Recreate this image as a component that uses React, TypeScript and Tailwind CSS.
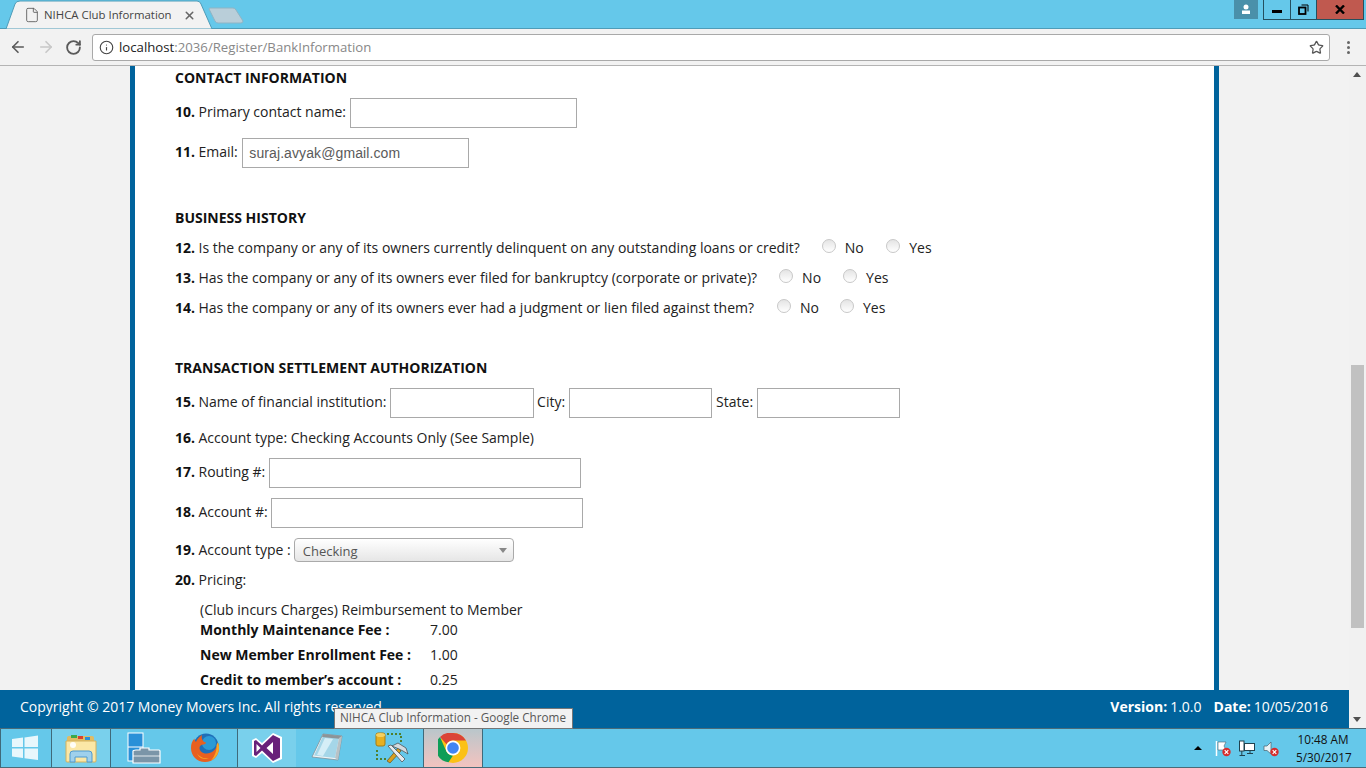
import React from "react";
import { ArrowLeft, ArrowRight, RotateCw, Info, Star, X, File } from "lucide-react";

function Radio({ className = "" }: { className?: string }) {
  return (
    <input
      type="radio"
      readOnly
      className={`appearance-none w-[14px] h-[14px] shrink-0 rounded-full border border-[#c8c8c8] bg-gradient-to-b from-[#e4e4e4] to-white -translate-y-px ${className}`}
    />
  );
}

function TextBox({ className = "", value }: { className?: string; value?: string }) {
  return (
    <input
      readOnly
      value={value ?? ""}
      className={`h-[30px] border border-[#a9a9a9] bg-white px-[6px] text-[14px] tracking-[0.1px] text-[#5a5a5a] font-['Liberation_Sans',sans-serif] outline-none ${className}`}
    />
  );
}

function Num({ n }: { n: number }) {
  return <b className="font-bold text-[#111] mr-[3.5px]">{n}.</b>;
}

function Heading({ children, className = "" }: { children: React.ReactNode; className?: string }) {
  return <div className={`font-bold text-[#111] flex items-center -translate-y-px ${className}`}>{children}</div>;
}

function Question({ n, text, a, b, c, d }: { n: number; text: string; a: string; b: string; c: string; d: string }) {
  return (
    <div className="h-[20px] mt-[10px] flex items-center whitespace-nowrap -translate-y-px">
      <Num n={n} />
      <span>{text}</span>
      <Radio className={a} />
      <span className={b}>No</span>
      <Radio className={c} />
      <span className={d}>Yes</span>
    </div>
  );
}

function Label({ n, children, className = "-translate-y-[2px]" }: { n: number; children: React.ReactNode; className?: string }) {
  return (
    <span className={className}>
      <Num n={n} />
      {children}
    </span>
  );
}

function TabBar() {
  return (
    <div className="h-[29px] bg-[#65c8ea] relative shrink-0 border-b border-[#4e9cb8]">
      <svg className="absolute left-0 top-0" width="250" height="29" viewBox="0 0 250 29">
        <path d="M6 29 L15 4 Q16 1 20 1 L197 1 Q200 1 201 4 L212 29 Z" fill="#f2f2f2" stroke="#4e9cb8" />
        <path d="M210 8 L233 8 Q235 8 236 10 L243 21 Q243 23 241 23 L218 23 Q216 23 215 21 L209 9 Q209 8 210 8 Z" fill="#b9ced9" stroke="#8fb4c4" />
      </svg>
      <div className="absolute left-[24px] top-[7px] flex items-center h-[16px]">
        <File size={16} strokeWidth={1.3} className="text-[#5a5a5a]" />
        <span className="ml-[4px] text-[11.4px] text-[#444] whitespace-nowrap">NIHCA Club Information</span>
        <X size={13} strokeWidth={2.8} className="ml-[11px] text-[#666]" />
      </div>
      <div className="absolute right-[108px] top-0 w-[24px] h-[19px] bg-[#4a90aa] flex items-center justify-center">
        <svg width="10" height="11" viewBox="0 0 10 11" fill="#fff">
          <circle cx="5" cy="3" r="2.5" />
          <rect x="1" y="6.5" width="8" height="3.5" />
        </svg>
      </div>
      <div className="absolute right-[2px] top-0 flex h-[20px] border border-t-0 border-[#24505f]">
        <div className="w-[27px] border-r border-[#24505f] flex items-center justify-center">
          <div className="w-[10px] h-[3px] bg-black mt-[3px]" />
        </div>
        <div className="w-[25px] flex items-center justify-center">
          <svg width="11" height="11" viewBox="0 0 11 11" fill="none" stroke="#000">
            <rect x="1" y="3.5" width="6.5" height="6.5" strokeWidth="1.8" />
            <path d="M3.5 1 H10 V7.5" strokeWidth="1" />
          </svg>
        </div>
        <div className="w-[47px] bg-[#c0594f] border-l border-[#24505f] flex items-center justify-center">
          <svg width="10" height="9" viewBox="0 0 10 9" stroke="#000" strokeWidth="2.4" fill="none">
            <path d="M1 0.5 L9 8.5 M9 0.5 L1 8.5" />
          </svg>
        </div>
      </div>
    </div>
  );
}

function Toolbar() {
  return (
    <div className="h-[37px] bg-[#f2f2f2] border-b border-[#b4b4b4] flex items-center shrink-0">
      <ArrowLeft size={18} strokeWidth={2.2} className="ml-[9px] text-[#5a5a5a]" />
      <ArrowRight size={18} strokeWidth={2.2} className="ml-[10px] text-[#c8c8c8]" />
      <RotateCw size={17} strokeWidth={2.6} className="ml-[10px] text-[#5a5a5a]" />
      <div className="ml-[10px] w-[1238px] h-[27px] bg-white border border-[#a9a9a9] rounded-[3px] flex items-center">
        <Info size={15} strokeWidth={1.8} className="ml-[6px] text-[#444]" />
        <span className="ml-[5px] text-[13.2px] whitespace-nowrap text-[#888] translate-y-px">
          <span className="text-[#222]">localhost</span>:2036/Register/BankInformation
        </span>
        <Star size={15} strokeWidth={2} className="ml-auto mr-[5px] text-[#555]" />
      </div>
      <div className="ml-[17px] flex flex-col gap-[2px]">
        <i className="block w-[3px] h-[3px] rounded-full bg-[#666]" />
        <i className="block w-[3px] h-[3px] rounded-full bg-[#666]" />
        <i className="block w-[3px] h-[3px] rounded-full bg-[#666]" />
      </div>
    </div>
  );
}

function Form() {
  return (
    <div className="flex-1 min-h-0 overflow-hidden flex bg-[#f2f2f2]">
      <div className="ml-[130px] mr-[130px] flex-1 bg-white border-x-[5px] border-[#00639c] pl-[40px] text-[14px] text-[#222]">
        <Heading className="h-[24px]">CONTACT INFORMATION</Heading>
        <div className="h-[30px] mt-[8px] flex items-center whitespace-nowrap">
          <Label n={10}>Primary contact name:</Label>
          <TextBox className="w-[227px] ml-[4px]" />
        </div>
        <div className="h-[30px] mt-[10px] flex items-center whitespace-nowrap">
          <Label n={11}>Email:</Label>
          <TextBox className="w-[227px] ml-[4.5px]" value="suraj.avyak@gmail.com" />
        </div>

        <Heading className="h-[20px] mt-[40px]">BUSINESS HISTORY</Heading>
        <Question n={12} text="Is the company or any of its owners currently delinquent on any outstanding loans or credit?" a="ml-[22px]" b="ml-[9px]" c="ml-[22px]" d="ml-[9.5px]" />
        <Question n={13} text="Has the company or any of its owners ever filed for bankruptcy (corporate or private)?" a="ml-[22px]" b="ml-[9px]" c="ml-[22px]" d="ml-[9px]" />
        <Question n={14} text="Has the company or any of its owners ever had a judgment or lien filed against them?" a="ml-[23px]" b="ml-[9px]" c="ml-[21px]" d="ml-[9px]" />

        <Heading className="h-[20px] mt-[40px]">TRANSACTION SETTLEMENT AUTHORIZATION</Heading>
        <div className="h-[30px] mt-[10px] flex items-center whitespace-nowrap">
          <Label n={15}>Name of financial institution:</Label>
          <TextBox className="w-[144px] ml-[3.5px]" />
          <span className="ml-[3px] -translate-y-[2px]">City:</span>
          <TextBox className="w-[143px] ml-[4px]" />
          <span className="ml-[4px] -translate-y-[2px]">State:</span>
          <TextBox className="w-[143px] ml-[4px]" />
        </div>
        <div className="h-[20px] mt-[10px] flex items-center whitespace-nowrap -translate-y-px">
          <Num n={16} />
          <span>Account type: Checking Accounts Only (See Sample)</span>
        </div>
        <div className="h-[30px] mt-[10px] flex items-center whitespace-nowrap">
          <Label n={17}>Routing #:</Label>
          <TextBox className="w-[312px] ml-[4px]" />
        </div>
        <div className="h-[30px] mt-[10px] flex items-center whitespace-nowrap">
          <Label n={18}>Account #:</Label>
          <TextBox className="w-[312px] ml-[3.5px]" />
        </div>
        <div className="h-[24px] mt-[10px] flex items-center whitespace-nowrap">
          <Label n={19} className="-translate-y-px">Account type :</Label>
          <div className="ml-[3px] w-[220px] h-[24px] rounded-[4px] border border-[#aaa] bg-gradient-to-b from-white to-[#e6e6e6] flex items-center pl-[8px] pr-[6px] text-[13px] text-[#555]">
            <span className="translate-y-[2px]">Checking</span>
            <span className="ml-auto w-0 h-0 border-x-[4px] border-x-transparent border-t-[5px] border-t-[#888]" />
          </div>
        </div>
        <div className="h-[20px] mt-[8px] flex items-center whitespace-nowrap -translate-y-px">
          <Num n={20} />
          <span>Pricing:</span>
        </div>
        <div className="ml-[25px] mt-[10px]">
          <div className="h-[20px] flex items-center -translate-y-px">(Club incurs Charges) Reimbursement to Member</div>
          <div className="grid grid-cols-[230px_60px] auto-rows-[25px] items-center leading-[20px] -mt-[3px]">
            <b className="font-bold text-[#111]">Monthly Maintenance Fee :</b>
            <span>7.00</span>
            <b className="font-bold text-[#111]">New Member Enrollment Fee :</b>
            <span>1.00</span>
            <b className="font-bold text-[#111]">Credit to member’s account :</b>
            <span>0.25</span>
          </div>
        </div>
      </div>
    </div>
  );
}

function Footer() {
  return (
    <footer className="h-[38px] shrink-0 bg-[#00639c] text-white text-[14px] flex items-center justify-between pl-[20px] pr-[21px] pb-[6px]">
      <span>Copyright © 2017 Money Movers Inc. All rights reserved</span>
      <span className="flex items-center">
        <b className="font-bold">Version:</b>
        <span className="ml-[3px]">1.0.0</span>
        <b className="font-bold ml-[12px]">Date:</b>
        <span className="ml-[3px]">10/05/2016</span>
      </span>
    </footer>
  );
}

function Scrollbar() {
  return (
    <div className="w-[17px] shrink-0 bg-[#f1f1f1] relative">
      <div className="absolute left-[4px] top-[6px] w-0 h-0 border-x-[4px] border-x-transparent border-b-[5px] border-b-[#505050]" />
      <div className="absolute left-[2px] top-[299px] w-[13px] h-[263px] bg-[#c1c1c1]" />
      <div className="absolute left-[4px] bottom-[6px] w-0 h-0 border-x-[4px] border-x-transparent border-t-[5px] border-t-[#505050]" />
    </div>
  );
}

const WinLogo = () => (
  <svg width="28" height="28" viewBox="0 0 28 28" fill="#fff" fillOpacity="0.85">
    <path d="M1 5 L12 3.6 V13 H1 Z M13.5 3.4 L27 1.6 V13 H13.5 Z M1 14.5 H12 V24 L1 22.6 Z M13.5 14.5 H27 V26 L13.5 24.2 Z" />
  </svg>
);

const Explorer = () => (
  <svg width="32" height="32" viewBox="0 0 32 32">
    <path d="M2 6 Q2 4 4 4 H27 Q29 4 29 6 V10 H2 Z" fill="#e0bb64" />
    <rect x="6" y="3" width="6" height="3" fill="#3ca84a" />
    <rect x="13" y="4" width="5" height="3" fill="#d8402f" />
    <rect x="20" y="5" width="5" height="3" fill="#2a8fd8" />
    <path d="M1 9 H31 V29 Q31 30 30 30 H2 Q1 30 1 29 Z" fill="#fbe7a6" stroke="#d4b25c" />
    <path d="M5 30 V22 Q5 19 8 19 H24 Q27 19 27 22 V30 H22 V25 H10 V30 Z" fill="#9fd0ec" stroke="#4f9ad0" />
    <circle cx="8" cy="13" r="3" fill="#fff" fillOpacity="0.9" />
  </svg>
);

const ServerMgr = () => (
  <svg width="34" height="32" viewBox="0 0 34 32">
    <rect x="1" y="1" width="15" height="28" fill="#2a90d8" stroke="#fff" />
    <path d="M1 15 H16" stroke="#fff" />
    <path d="M9 18 H13 V16 H22 V18 H32 Q33 18 33 19 V31 H6 V19 Q6 18 9 18 Z" fill="#7b95a8" stroke="#fff" strokeWidth="1.2" />
    <path d="M6 24 H33" stroke="#fff" strokeWidth="0.8" />
  </svg>
);

const Firefox = () => (
  <svg width="30" height="30" viewBox="0 0 30 30">
    <circle cx="16" cy="13" r="12.5" fill="#1f6fb8" />
    <circle cx="19" cy="10" r="7" fill="#2b9ad6" />
    <path d="M12 2 C9 4 7 6 6 9 C5 8 4.5 7 4.5 5.5 C2 8 1 11 1 15 C1 23 7 29 15 29 C23 29 29 23 29 15 C29 13 28.6 11 27.8 9.5 C27.5 14 24 20 17 20.5 C12.5 20.8 9.5 18 9.5 15 C9.5 12.5 12 11 14 11.5 C15 11 16 10.5 16 9.5 C13 9 11 6 12 2 Z" fill="#e8601f" />
    <path d="M27.8 9.5 C28.6 11 29 13 29 15 C29 20 26 25 21 27.5 C25 23 27 17 26.5 12 Z" fill="#f9a825" />
    <path d="M7 20 C9 24 14 26 19 25 C15 27 9 26 7 20 Z" fill="#f9a825" />
  </svg>
);

const VS = () => (
  <svg width="32" height="32" viewBox="0 0 32 32">
    <path d="M22 1 L31 5 V27 L22 31 L11 21 L5 26 L1 24 V8 L5 6 L11 11 Z" fill="#fff" />
    <path d="M22 3 L29 6.5 V25.5 L22 29 L11 18.5 L5 24 L3 23 V9 L5 8 L11 13.5 Z M22 10 L15.5 16 L22 22 Z M5.5 12 V20 L9.5 16 Z" fill="#68217a" fillRule="evenodd" />
  </svg>
);

const Notepad = () => (
  <svg width="32" height="30" viewBox="0 0 32 30">
    <path d="M12 1 L31 3 L27 27 L1 24 Z" fill="#eef4f6" stroke="#7f9199" strokeWidth="0.8" />
    <path d="M12 3 L28 5 L24 25 L3 22.5 Z" fill="#a5d6e8" />
    <path d="M6 22 L14 5 L22 6 L12 23 Z" fill="#d5eef7" />
    <path d="M12 1 L31 3 L30.5 6 L11 4 Z" fill="#8c9498" />
    <path d="M28 5 L24 25 L27 27 L31 3 Z" fill="#b8c2c6" />
  </svg>
);

const Tools = () => (
  <svg width="34" height="32" viewBox="0 0 34 32">
    <rect x="1" y="1" width="9" height="13" rx="2" fill="#e6b020" stroke="#a87c10" />
    <ellipse cx="5.5" cy="3" rx="4.5" ry="2" fill="#f4d060" />
    <path d="M12 2 H26 V12 M2 18 V27 H11" fill="none" stroke="#4f7f2e" strokeWidth="2" strokeDasharray="2 2" />
    <path d="M12 29 L23 16 L26 19 L15 31 Z" fill="#d8a020" stroke="#604010" strokeWidth="0.6" />
    <path d="M17 14 L23 11 L31 16 L33 22 L28 19 L24 17 Z" fill="#d5dbe0" stroke="#444" strokeWidth="0.7" />
    <path d="M13 14 L16 13 L30 27 L27 30 Z" fill="#e6eaee" stroke="#444" strokeWidth="0.7" />
  </svg>
);

const Chrome = () => (
  <svg width="30" height="30" viewBox="0 0 30 30">
    <circle cx="15" cy="15" r="15" fill="#fbc116" />
    <path d="M15 0 A15 15 0 0 1 28 7.5 H15 A7.5 7.5 0 0 0 8.5 11.2 L2 3.9 A15 15 0 0 1 15 0 Z" fill="#db4437" />
    <path d="M2 3.9 L8.5 18.8 A7.5 7.5 0 0 0 15 22.5 L10.5 29.3 A15 15 0 0 1 2 3.9 Z" fill="#0f9d58" />
    <circle cx="15" cy="15" r="7.4" fill="#fff" />
    <circle cx="15" cy="15" r="5.8" fill="#4285f4" />
  </svg>
);

function Flag() {
  return (
    <svg width="16" height="17" viewBox="0 0 16 17">
      <path d="M1.5 1 V16" stroke="#fff" strokeWidth="1.5" />
      <path d="M3 2 H11 L9 6 L11 10 H3 Z" fill="#fff" stroke="#47606c" strokeWidth="0.6" />
      <circle cx="11.5" cy="12" r="4.2" fill="#d62d2d" />
      <path d="M9.7 10.2 L13.3 13.8 M13.3 10.2 L9.7 13.8" stroke="#fff" strokeWidth="1.2" />
    </svg>
  );
}

function Net() {
  return (
    <svg width="16" height="17" viewBox="0 0 16 17" fill="none" stroke="#20424f">
      <rect x="0.5" y="1" width="4.5" height="10" fill="#fff" />
      <rect x="5.5" y="3.5" width="10" height="7" fill="#fff" />
      <path d="M2.8 11 V15.5 M8 13.5 H14 M11 10.5 V13.5 M0.5 15.5 H6" />
    </svg>
  );
}

function Speaker() {
  return (
    <svg width="16" height="17" viewBox="0 0 16 17">
      <path d="M1 6 H4 L8 2 V14 L4 10.5 H1 Z" fill="#e8f2f6" stroke="#47606c" strokeWidth="0.7" />
      <circle cx="11.5" cy="12" r="4.2" fill="#d62d2d" />
      <path d="M9.7 10.2 L13.3 13.8 M13.3 10.2 L9.7 13.8" stroke="#fff" strokeWidth="1.2" />
    </svg>
  );
}

function TaskBtn({ children, className = "" }: { children: React.ReactNode; className?: string }) {
  return <div className={`h-full flex items-center border-l border-[#3f6a7a] ${className}`}>{children}</div>;
}

function Taskbar() {
  return (
    <div className="h-[40px] shrink-0 bg-[#65c8ea] border-y border-[#4a6b78] flex items-stretch relative">
      <TaskBtn className="w-[51px] pl-[10px]"><WinLogo /></TaskBtn>
      <TaskBtn className="w-[59px] pl-[13px] bg-[#79d0ec]"><Explorer /></TaskBtn>
      <TaskBtn className="w-[127px] pl-[16px] gap-[29px]">
        <ServerMgr />
        <Firefox />
      </TaskBtn>
      <TaskBtn className="w-[59px] pl-[13px] bg-[#79d0ec]"><VS /></TaskBtn>
      <TaskBtn className="w-[60px] pl-[15px] border-l-0"><Notepad /></TaskBtn>
      <TaskBtn className="w-[67px] pl-[19px] border-l-0"><Tools /></TaskBtn>
      <TaskBtn className="w-[60px] pl-[14px] bg-gradient-to-b from-[#b9c6cb] to-[#f3c3bf] border-r"><Chrome /></TaskBtn>
      <div className="ml-auto flex items-center">
        <div className="w-0 h-0 border-x-[4px] border-x-transparent border-b-[4px] border-b-black mr-[13px]" />
        <Flag />
        <span className="w-[8px]" />
        <Net />
        <span className="w-[8px]" />
        <Speaker />
        <div className="ml-[17px] mr-[16px] w-[54px] text-center text-[11.75px] leading-[18px] text-[#111] whitespace-nowrap">
          <div>10:48 AM</div>
          <div>5/30/2017</div>
        </div>
      </div>
    </div>
  );
}

export default function App() {
  return (
    <div className="h-screen w-full overflow-hidden flex flex-col relative font-['Open_Sans',sans-serif]">
      <TabBar />
      <Toolbar />
      <div className="flex-1 min-h-0 flex">
        <div className="flex-1 min-w-0 flex flex-col">
          <Form />
          <Footer />
        </div>
        <Scrollbar />
      </div>
      <Taskbar />
      <div className="absolute left-[334px] top-[708px] h-[21px] w-[239px] bg-[#f2f2f2] border border-[#767676] flex items-center pl-[5px] pb-[1px] text-[11.7px] text-[#575757] whitespace-nowrap">
        NIHCA Club Information - Google Chrome
      </div>
    </div>
  );
}
